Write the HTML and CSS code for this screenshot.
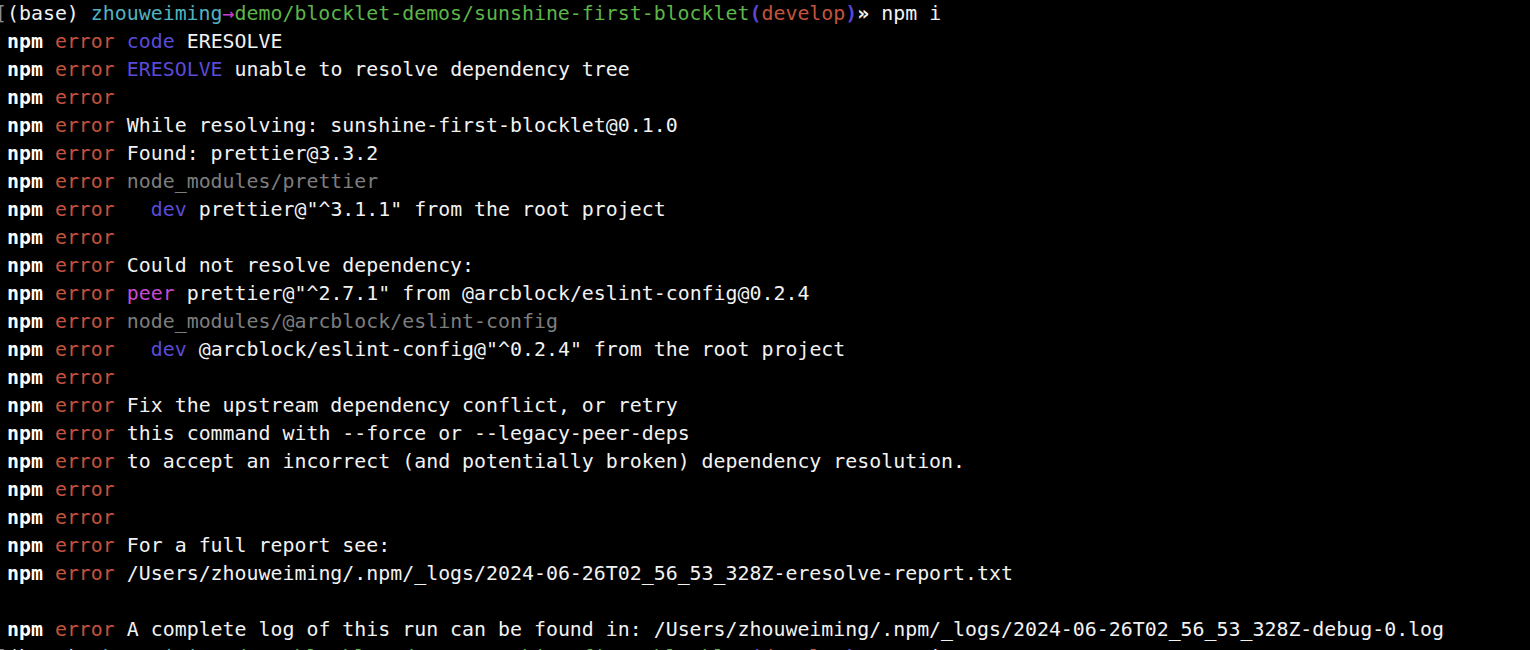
FILE: index.html
```html
<!DOCTYPE html>
<html>
<head>
<meta charset="utf-8">
<link rel="stylesheet" href="styles.css">
</head>
<body>
<div class="term">
<div class="line prompt"><span class="cur">[</span><span class="w">(base) </span><span class="cy">zhouweiming</span><span class="mg">→</span><span class="gr">demo/blocklet-demos/sunshine-first-blocklet</span><span class="par">(</span><span class="rd">develop</span><span class="par">)</span><span class="ws">»</span><span class="w"> npm i</span></div>
<div class="line"><b class="npm">npm</b> <span class="err">error</span> <span class="bl">code</span> ERESOLVE</div>
<div class="line"><b class="npm">npm</b> <span class="err">error</span> <span class="bl">ERESOLVE</span> unable to resolve dependency tree</div>
<div class="line"><b class="npm">npm</b> <span class="err">error</span></div>
<div class="line"><b class="npm">npm</b> <span class="err">error</span> While resolving: sunshine-first-blocklet@0.1.0</div>
<div class="line"><b class="npm">npm</b> <span class="err">error</span> Found: prettier@3.3.2</div>
<div class="line"><b class="npm">npm</b> <span class="err">error</span> <span class="gy">node_modules/prettier</span></div>
<div class="line"><b class="npm">npm</b> <span class="err">error</span>   <span class="bl">dev</span> prettier@"^3.1.1" from the root project</div>
<div class="line"><b class="npm">npm</b> <span class="err">error</span></div>
<div class="line"><b class="npm">npm</b> <span class="err">error</span> Could not resolve dependency:</div>
<div class="line"><b class="npm">npm</b> <span class="err">error</span> <span class="pk">peer</span> prettier@"^2.7.1" from @arcblock/eslint-config@0.2.4</div>
<div class="line"><b class="npm">npm</b> <span class="err">error</span> <span class="gy">node_modules/@arcblock/eslint-config</span></div>
<div class="line"><b class="npm">npm</b> <span class="err">error</span>   <span class="bl">dev</span> @arcblock/eslint-config@"^0.2.4" from the root project</div>
<div class="line"><b class="npm">npm</b> <span class="err">error</span></div>
<div class="line"><b class="npm">npm</b> <span class="err">error</span> Fix the upstream dependency conflict, or retry</div>
<div class="line"><b class="npm">npm</b> <span class="err">error</span> this command with --force or --legacy-peer-deps</div>
<div class="line"><b class="npm">npm</b> <span class="err">error</span> to accept an incorrect (and potentially broken) dependency resolution.</div>
<div class="line"><b class="npm">npm</b> <span class="err">error</span></div>
<div class="line"><b class="npm">npm</b> <span class="err">error</span></div>
<div class="line"><b class="npm">npm</b> <span class="err">error</span> For a full report see:</div>
<div class="line"><b class="npm">npm</b> <span class="err">error</span> /Users/zhouweiming/.npm/_logs/2024-06-26T02_56_53_328Z-eresolve-report.txt</div>
<div class="line"> </div>
<div class="line"><b class="npm">npm</b> <span class="err">error</span> A complete log of this run can be found in: /Users/zhouweiming/.npm/_logs/2024-06-26T02_56_53_328Z-debug-0.log</div>
<div class="line prompt"><span class="cur">[</span><span class="w">(base) </span><span class="cy">zhouweiming</span><span class="mg">→</span><span class="gr">demo/blocklet-demos/sunshine-first-blocklet</span><span class="par">(</span><span class="rd">develop</span><span class="par">)</span><span class="ws">»</span><span class="w"> npm i</span></div>
</div>
</body>
</html>
```
FILE: styles.css
```css
html, body {
  margin: 0;
  padding: 0;
  background: #000;
  overflow: hidden;
}
.term {
  padding-left: 7px;
  font-family: "DejaVu Sans Mono", "Liberation Mono", monospace;
  font-size: 19.9px;
  line-height: 28px;
  color: #f2f2f2;
}
.line {
  height: 28px;
  white-space: pre;
}
.prompt {
  text-indent: -12px;
}
.cur { color: #8a8a8a; }
.w { color: #f2f2f2; }
.ws { color: #f2f2f2; font-weight: bold; }
.cy { color: #52b3c0; }
.mg { color: #c83fce; }
.gr { color: #5db548; }
.par { color: #5746d8; font-weight: bold; }
.rd { color: #c5533c; }
.npm { color: #ffffff; font-weight: bold; }
.err { color: #c5533c; }
.bl { color: #5a4bd8; }
.gy { color: #7d7d7d; }
.pk { color: #c74ad0; }
```
